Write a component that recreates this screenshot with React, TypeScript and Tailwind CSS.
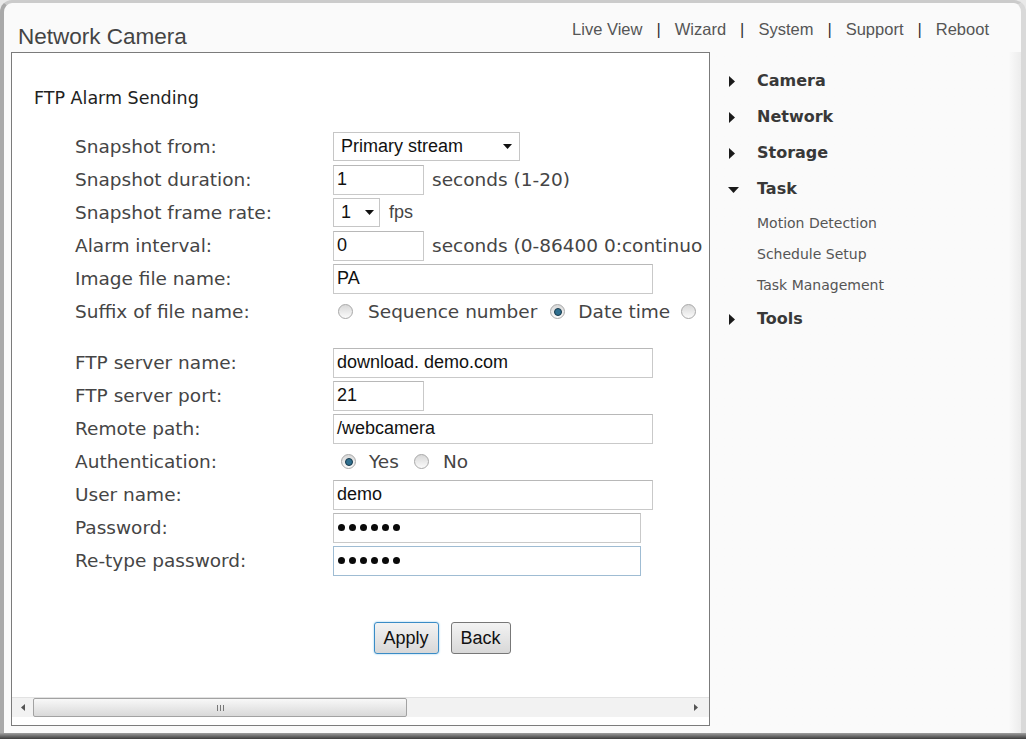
import React from 'react';

const VERDANA = "font-['DejaVu_Sans',Verdana,sans-serif]";
const ARIAL = "font-['Liberation_Sans',Arial,sans-serif]";

function RightTri() {
  return (
    <svg width="8" height="11" viewBox="0 0 8 11" className="block">
      <polygon points="1,0 7,5.5 1,11" fill="#1a1a1a" />
    </svg>
  );
}

function DownTri() {
  return (
    <svg width="11" height="7" viewBox="0 0 11 7" className="block">
      <polygon points="0,1 11,1 5.5,7" fill="#1a1a1a" />
    </svg>
  );
}

function SelectArrow() {
  return (
    <svg width="9" height="5" viewBox="0 0 9 5" className="block">
      <polygon points="0,0 9,0 4.5,5" fill="#111" />
    </svg>
  );
}

function TextBox({ value, w, focus }: { value: React.ReactNode; w: string; focus?: boolean }) {
  return (
    <div
      className={`${w} h-[30px] flex items-center pl-[3px] bg-white border ${
        focus ? 'border-[#9fbcd3]' : 'border-[#c9c9c9] border-t-[#b8b8b8]'
      } ${ARIAL} text-[18px] text-[#111] whitespace-nowrap`}
    >
      {value}
    </div>
  );
}

function Dots() {
  return (
    <div className="flex items-center gap-[4px] pl-[1px]">
      {[0, 1, 2, 3, 4, 5].map((i) => (
        <span key={i} className="w-[7px] h-[7px] rounded-full bg-[#0a0a0a]" />
      ))}
    </div>
  );
}

function Select({ value, w, arrowGap }: { value: string; w: string; arrowGap: string }) {
  return (
    <div
      className={`${w} h-[29px] flex items-center justify-between pl-[7px] ${arrowGap} bg-white border border-[#c6c6c6] ${ARIAL} text-[18px] text-[#111]`}
    >
      <span>{value}</span>
      <SelectArrow />
    </div>
  );
}

function Radio({ checked }: { checked?: boolean }) {
  return (
    <span className="w-[15px] h-[15px] shrink-0 rounded-full border border-[#a8a8a8] bg-linear-to-b from-[#d8d8d8] to-[#fbfbfb] flex items-center justify-center">
      {checked && (
        <span className="w-[8px] h-[8px] rounded-full bg-[#2f6f8f] border border-[#16384a]" />
      )}
    </span>
  );
}

function Row({ label, children }: { label: string; children: React.ReactNode }) {
  return (
    <div className="flex h-[33px] items-center">
      <div className={`w-[258px] shrink-0 ${VERDANA} text-[18.5px] text-[#454545] whitespace-nowrap`}>
        {label}
      </div>
      <div className="flex items-center whitespace-nowrap">{children}</div>
    </div>
  );
}

function Unit({ children, arial }: { children: React.ReactNode; arial?: boolean }) {
  return (
    <span
      className={`${arial ? `${ARIAL} text-[18px] ml-[9px]` : `${VERDANA} text-[18.5px] ml-[8px]`} text-[#454545] whitespace-nowrap`}
    >
      {children}
    </span>
  );
}

function RadioLabel({ children, ml }: { children: React.ReactNode; ml: string }) {
  return (
    <span className={`${ml} ${VERDANA} text-[18.5px] text-[#454545] whitespace-nowrap`}>{children}</span>
  );
}

const NAV = ['Live View', 'Wizard', 'System', 'Support', 'Reboot'];

const MENU: { label: string; open?: boolean; children?: string[] }[] = [
  { label: 'Camera' },
  { label: 'Network' },
  { label: 'Storage' },
  { label: 'Task', open: true, children: ['Motion Detection', 'Schedule Setup', 'Task Management'] },
  { label: 'Tools' },
];

export default function App() {
  return (
    <div className="w-[1026px] h-[739px] flex flex-col overflow-hidden bg-[#e9e9e9]">
      <div className="flex-1 min-h-0 flex flex-col rounded-t-[12px] border-l-[4px] border-t-[3px] border-r-[5px] border-l-[#a9a9a9] border-t-[#cbcbcb] border-r-[#d9d9d9] bg-[#fafafa]">
        {/* header */}
        <div className="h-[49px] shrink-0 flex justify-between">
          <div className={`self-end pb-[3px] pl-[14px] ${ARIAL} text-[22.5px] leading-[25px] text-[#444]`}>
            Network Camera
          </div>
          <div className={`pt-[17px] pr-[32px] flex ${ARIAL} text-[16.5px] leading-[19px] text-[#555]`}>
            {NAV.map((item, i) => (
              <React.Fragment key={item}>
                {i > 0 && <span className="mx-[14px] text-[#333]">|</span>}
                <span>{item}</span>
              </React.Fragment>
            ))}
          </div>
        </div>

        {/* main */}
        <div className="flex-1 min-h-0 flex">
          {/* settings frame */}
          <div className="ml-[7px] w-[699px] h-[674px] shrink-0 flex flex-col border border-[#7b7b7b] bg-white">
            <div className="flex-1 min-h-0 overflow-hidden">
              <div className="w-[860px]">
                <div className={`pt-[33px] pl-[22px] h-[57px] ${VERDANA} text-[17.5px] leading-[24px] text-[#222]`}>
                  FTP Alarm Sending
                </div>
                <div className="mt-[20px] pl-[63px]">
                  <Row label="Snapshot from:">
                    <Select value="Primary stream" w="w-[187px]" arrowGap="pr-[7px]" />
                  </Row>
                  <Row label="Snapshot duration:">
                    <TextBox value="1" w="w-[91px]" />
                    <Unit>seconds (1-20)</Unit>
                  </Row>
                  <Row label="Snapshot frame rate:">
                    <Select value="1" w="w-[47px]" arrowGap="pr-[5px]" />
                    <Unit arial>fps</Unit>
                  </Row>
                  <Row label="Alarm interval:">
                    <TextBox value="0" w="w-[91px]" />
                    <Unit>seconds (0-86400 0:continuo</Unit>
                  </Row>
                  <Row label="Image file name:">
                    <TextBox value="PA" w="w-[320px]" />
                  </Row>
                  <Row label="Suffix of file name:">
                    <span className="ml-[5px]" />
                    <Radio />
                    <RadioLabel ml="ml-[15px]">Sequence number</RadioLabel>
                    <span className="ml-[13px]" />
                    <Radio checked />
                    <RadioLabel ml="ml-[13px]">Date time</RadioLabel>
                    <span className="ml-[11px]" />
                    <Radio />
                  </Row>

                  <div className="h-[18px]" />

                  <Row label="FTP server name:">
                    <TextBox value="download. demo.com" w="w-[320px]" />
                  </Row>
                  <Row label="FTP server port:">
                    <TextBox value="21" w="w-[91px]" />
                  </Row>
                  <Row label="Remote path:">
                    <TextBox value="/webcamera" w="w-[320px]" />
                  </Row>
                  <Row label="Authentication:">
                    <span className="ml-[8px]" />
                    <Radio checked />
                    <RadioLabel ml="ml-[13px]">Yes</RadioLabel>
                    <span className="ml-[15px]" />
                    <Radio />
                    <RadioLabel ml="ml-[14px]">No</RadioLabel>
                  </Row>
                  <Row label="User name:">
                    <TextBox value="demo" w="w-[320px]" />
                  </Row>
                  <Row label="Password:">
                    <TextBox value={<Dots />} w="w-[308px]" />
                  </Row>
                  <Row label="Re-type password:">
                    <TextBox value={<Dots />} w="w-[308px]" focus />
                  </Row>
                </div>

                <div className={`mt-[45px] flex justify-center gap-[12px] ${ARIAL} text-[18px] text-[#111]`}>
                  <button className="w-[65px] h-[32px] rounded-[3px] border border-[#3a8cc6] shadow-[0_0_2px_#7fc0ea] bg-linear-to-b from-[#f3f3f3] to-[#d8d8d8]">
                    Apply
                  </button>
                  <button className="w-[60px] h-[32px] rounded-[3px] border border-[#777] bg-linear-to-b from-[#f3f3f3] to-[#d8d8d8]">
                    Back
                  </button>
                </div>
              </div>
            </div>

            {/* horizontal scrollbar */}
            <div className="h-[20px] shrink-0 flex items-center bg-[#f2f2f2] border-t border-[#e2e2e2]">
              <div className="w-[21px] flex justify-center">
                <svg width="4" height="7" viewBox="0 0 4 7">
                  <polygon points="4,0 0,3.5 4,7" fill="#555" />
                </svg>
              </div>
              <div className="w-[374px] h-[19px] rounded-[2px] border border-[#a2a2a2] bg-linear-to-b from-[#f8f8f8] to-[#d9d9d9] flex items-center justify-center gap-[2px]">
                <span className="w-[1px] h-[6px] bg-[#777]" />
                <span className="w-[1px] h-[6px] bg-[#777]" />
                <span className="w-[1px] h-[6px] bg-[#777]" />
              </div>
              <div className="flex-1" />
              <div className="w-[26px] flex justify-center">
                <svg width="4" height="7" viewBox="0 0 4 7">
                  <polygon points="0,0 4,3.5 0,7" fill="#555" />
                </svg>
              </div>
            </div>
            <div className="h-[8px] shrink-0" />
          </div>

          {/* side menu */}
          <div className="flex-1 pl-[18px] pt-[11px] bg-linear-to-r from-[#fafafa] from-96% to-[#ececec]">
            {MENU.map((m) => (
              <div key={m.label}>
                <div className="h-[36px] flex items-center">
                  <div className="w-[29px] flex">{m.open ? <DownTri /> : <RightTri />}</div>
                  <span className={`${VERDANA} text-[16px] font-bold text-[#383838]`}>{m.label}</span>
                </div>
                {m.children && (
                  <div className="pt-[1px]">
                    {m.children.map((c) => (
                      <div key={c} className={`h-[31px] flex items-center pl-[29px] ${VERDANA} text-[14px] text-[#555]`}>
                        {c}
                      </div>
                    ))}
                  </div>
                )}
              </div>
            ))}
          </div>
        </div>
      </div>
      <div className="h-[6px] shrink-0 bg-linear-to-b from-[#a0a0a0] to-[#3e3e3e]" />
    </div>
  );
}
